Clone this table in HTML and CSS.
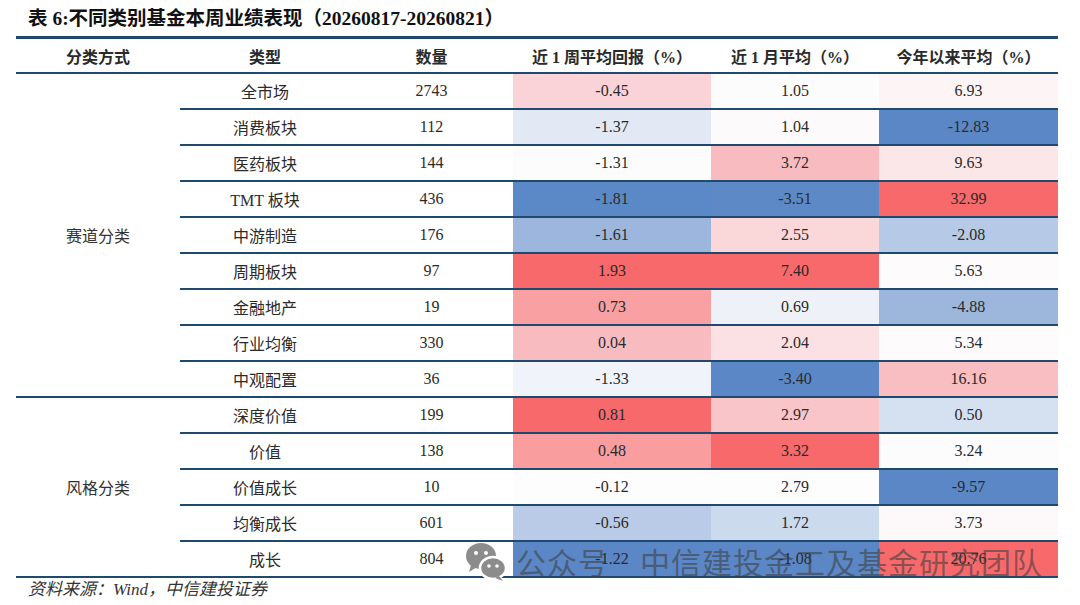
FILE: index.html
```html
<!DOCTYPE html>
<html lang="zh">
<head>
<meta charset="utf-8">
<link rel="stylesheet" href="styles.css">
</head>
<body>
<div class="page">
  <h1 class="title">表 6:不同类别基金本周业绩表现（20260817-20260821）</h1>
  <div class="wrap">
    <table class="tbl">
      <colgroup>
        <col class="c1"><col class="c2"><col class="c3"><col class="c4"><col class="c5"><col class="c6">
      </colgroup>
      <thead>
        <tr><th>分类方式</th><th>类型</th><th>数量</th><th>近 1 周平均回报（%）</th><th>近 1 月平均（%）</th><th>今年以来平均（%）</th></tr>
      </thead>
      <tbody>
        <tr><td class="grp" rowspan="9">赛道分类</td><td>全市场</td><td>2743</td><td style="background:#f9d3d8">-0.45</td><td style="background:#fdfcfd">1.05</td><td style="background:#fcf4f5">6.93</td></tr>
        <tr><td>消费板块</td><td>112</td><td style="background:#e3e9f4">-1.37</td><td style="background:#fdfafb">1.04</td><td style="background:#5b87c6">-12.83</td></tr>
        <tr><td>医药板块</td><td>144</td><td style="background:#fcfcfd">-1.31</td><td style="background:#f8bcc0">3.72</td><td style="background:#fbe6e8">9.63</td></tr>
        <tr><td>TMT 板块</td><td>436</td><td style="background:#5b88c6">-1.81</td><td style="background:#5d8ac6">-3.51</td><td style="background:#f8696b">32.99</td></tr>
        <tr><td>中游制造</td><td>176</td><td style="background:#9db6de">-1.61</td><td style="background:#fad8da">2.55</td><td style="background:#b6c9e6">-2.08</td></tr>
        <tr><td>周期板块</td><td>97</td><td style="background:#f8696b">1.93</td><td style="background:#f8696b">7.40</td><td style="background:#fdfbfc">5.63</td></tr>
        <tr><td>金融地产</td><td>19</td><td style="background:#f9a0a3">0.73</td><td style="background:#eef2f8">0.69</td><td style="background:#9cb6dc">-4.88</td></tr>
        <tr><td>行业均衡</td><td>330</td><td style="background:#f8bcc0">0.04</td><td style="background:#fbe1e3">2.04</td><td style="background:#fdfbfc">5.34</td></tr>
        <tr class="last"><td>中观配置</td><td>36</td><td style="background:#f0f3f9">-1.33</td><td style="background:#5b87c6">-3.40</td><td style="background:#f9bec2">16.16</td></tr>
        <tr><td class="grp" rowspan="5">风格分类</td><td>深度价值</td><td>199</td><td style="background:#f8696b">0.81</td><td style="background:#f9c5c8">2.97</td><td style="background:#d5e0f0">0.50</td></tr>
        <tr><td>价值</td><td>138</td><td style="background:#f99d9f">0.48</td><td style="background:#f8696b">3.32</td><td style="background:#fdfcfd">3.24</td></tr>
        <tr><td>价值成长</td><td>10</td><td style="background:#fdfdfe">-0.12</td><td style="background:#fefdfe">2.79</td><td style="background:#5b87c6">-9.57</td></tr>
        <tr><td>均衡成长</td><td>601</td><td style="background:#b9cbe7">-0.56</td><td style="background:#ccdaee">1.72</td><td style="background:#fdf8f9">3.73</td></tr>
        <tr class="last"><td>成长</td><td>804</td><td style="background:#5b87c6">-1.22</td><td style="background:#5b87c6">-1.08</td><td style="background:#f8696b">20.76</td></tr>
      </tbody>
    </table>
    <div class="watermark">
      <svg class="wx" viewBox="0 0 44 40" width="44" height="40" aria-hidden="true">
        <ellipse cx="17" cy="15" rx="15" ry="13" fill="#8c8c8c"/>
        <path d="M7 24 L5 31 L13 26 Z" fill="#8c8c8c"/>
        <circle cx="12" cy="12" r="2" fill="#ffffff"/>
        <circle cx="22" cy="12" r="2" fill="#ffffff"/>
        <ellipse cx="29" cy="27" rx="13" ry="11" fill="#8c8c8c" stroke="#ffffff" stroke-width="2.5"/>
        <path d="M35 35 L39 40 L31 37 Z" fill="#8c8c8c"/>
        <circle cx="25" cy="25" r="1.8" fill="#ffffff"/>
        <circle cx="33" cy="25" r="1.8" fill="#ffffff"/>
      </svg>
      <span class="wm1">公众号</span><span class="wm2">中信建投金工及基金研究团队</span>
    </div>
  </div>
  <p class="source">资料来源：Wind，中信建投证券</p>
</div>
</body>
</html>
```
FILE: styles.css
```css
html, body {
  margin: 0;
  padding: 0;
  background: #ffffff;
}
.page {
  width: 1080px;
  height: 605px;
  overflow: hidden;
  font-family: "Liberation Serif", "Noto Sans CJK SC", serif;
  color: #1a1a1a;
}
.title {
  margin: 0;
  padding: 8px 0 0 28px;
  height: 28px;
  box-sizing: border-box;
  font-size: 19.5px;
  line-height: 22px;
  font-weight: bold;
  color: #111;
  font-family: "Liberation Serif", "Noto Sans CJK SC", serif;
}
.wrap {
  position: relative;
  margin: 8px 0 0 16px;
  width: 1042px;
}
.tbl {
  width: 1042px;
  border-collapse: collapse;
  table-layout: fixed;
  border-top: 3px solid #1f4a6e;
  font-size: 16px;
}
.c1 { width: 164px; }
.c2 { width: 170px; }
.c3 { width: 163px; }
.c4 { width: 198px; }
.c5 { width: 168px; }
.c6 { width: 179px; }
.tbl th {
  height: 33px;
  padding: 0;
  font-weight: bold;
  font-size: 16px;
  color: #2a2a2a;
  border-bottom: 2px solid #1f4a6e;
  text-align: center;
  vertical-align: middle;
}
.tbl td {
  height: 34px;
  padding: 0;
  text-align: center;
  vertical-align: middle;
  border-bottom: 2px solid #1f4a6e;
  color: #2a2a2a;
}
.tbl td.grp {
  color: #333;
}
.source {
  margin: 1px 0 0 28px;
  font-size: 17px;
  font-style: italic;
  color: #333;
  line-height: 22px;
}
.watermark {
  position: absolute;
  left: 448px;
  top: 505px;
  display: flex;
  align-items: center;
  pointer-events: none;
  white-space: nowrap;
}
.wx {
  margin-right: 8px;
}
.wm1, .wm2 {
  font-family: "Noto Sans CJK SC", sans-serif;
  font-size: 30px;
  line-height: 36px;
  color: rgba(60, 60, 60, 0.58);
  letter-spacing: 1px;
}
.wm2 {
  margin-left: 31px;
}
```
